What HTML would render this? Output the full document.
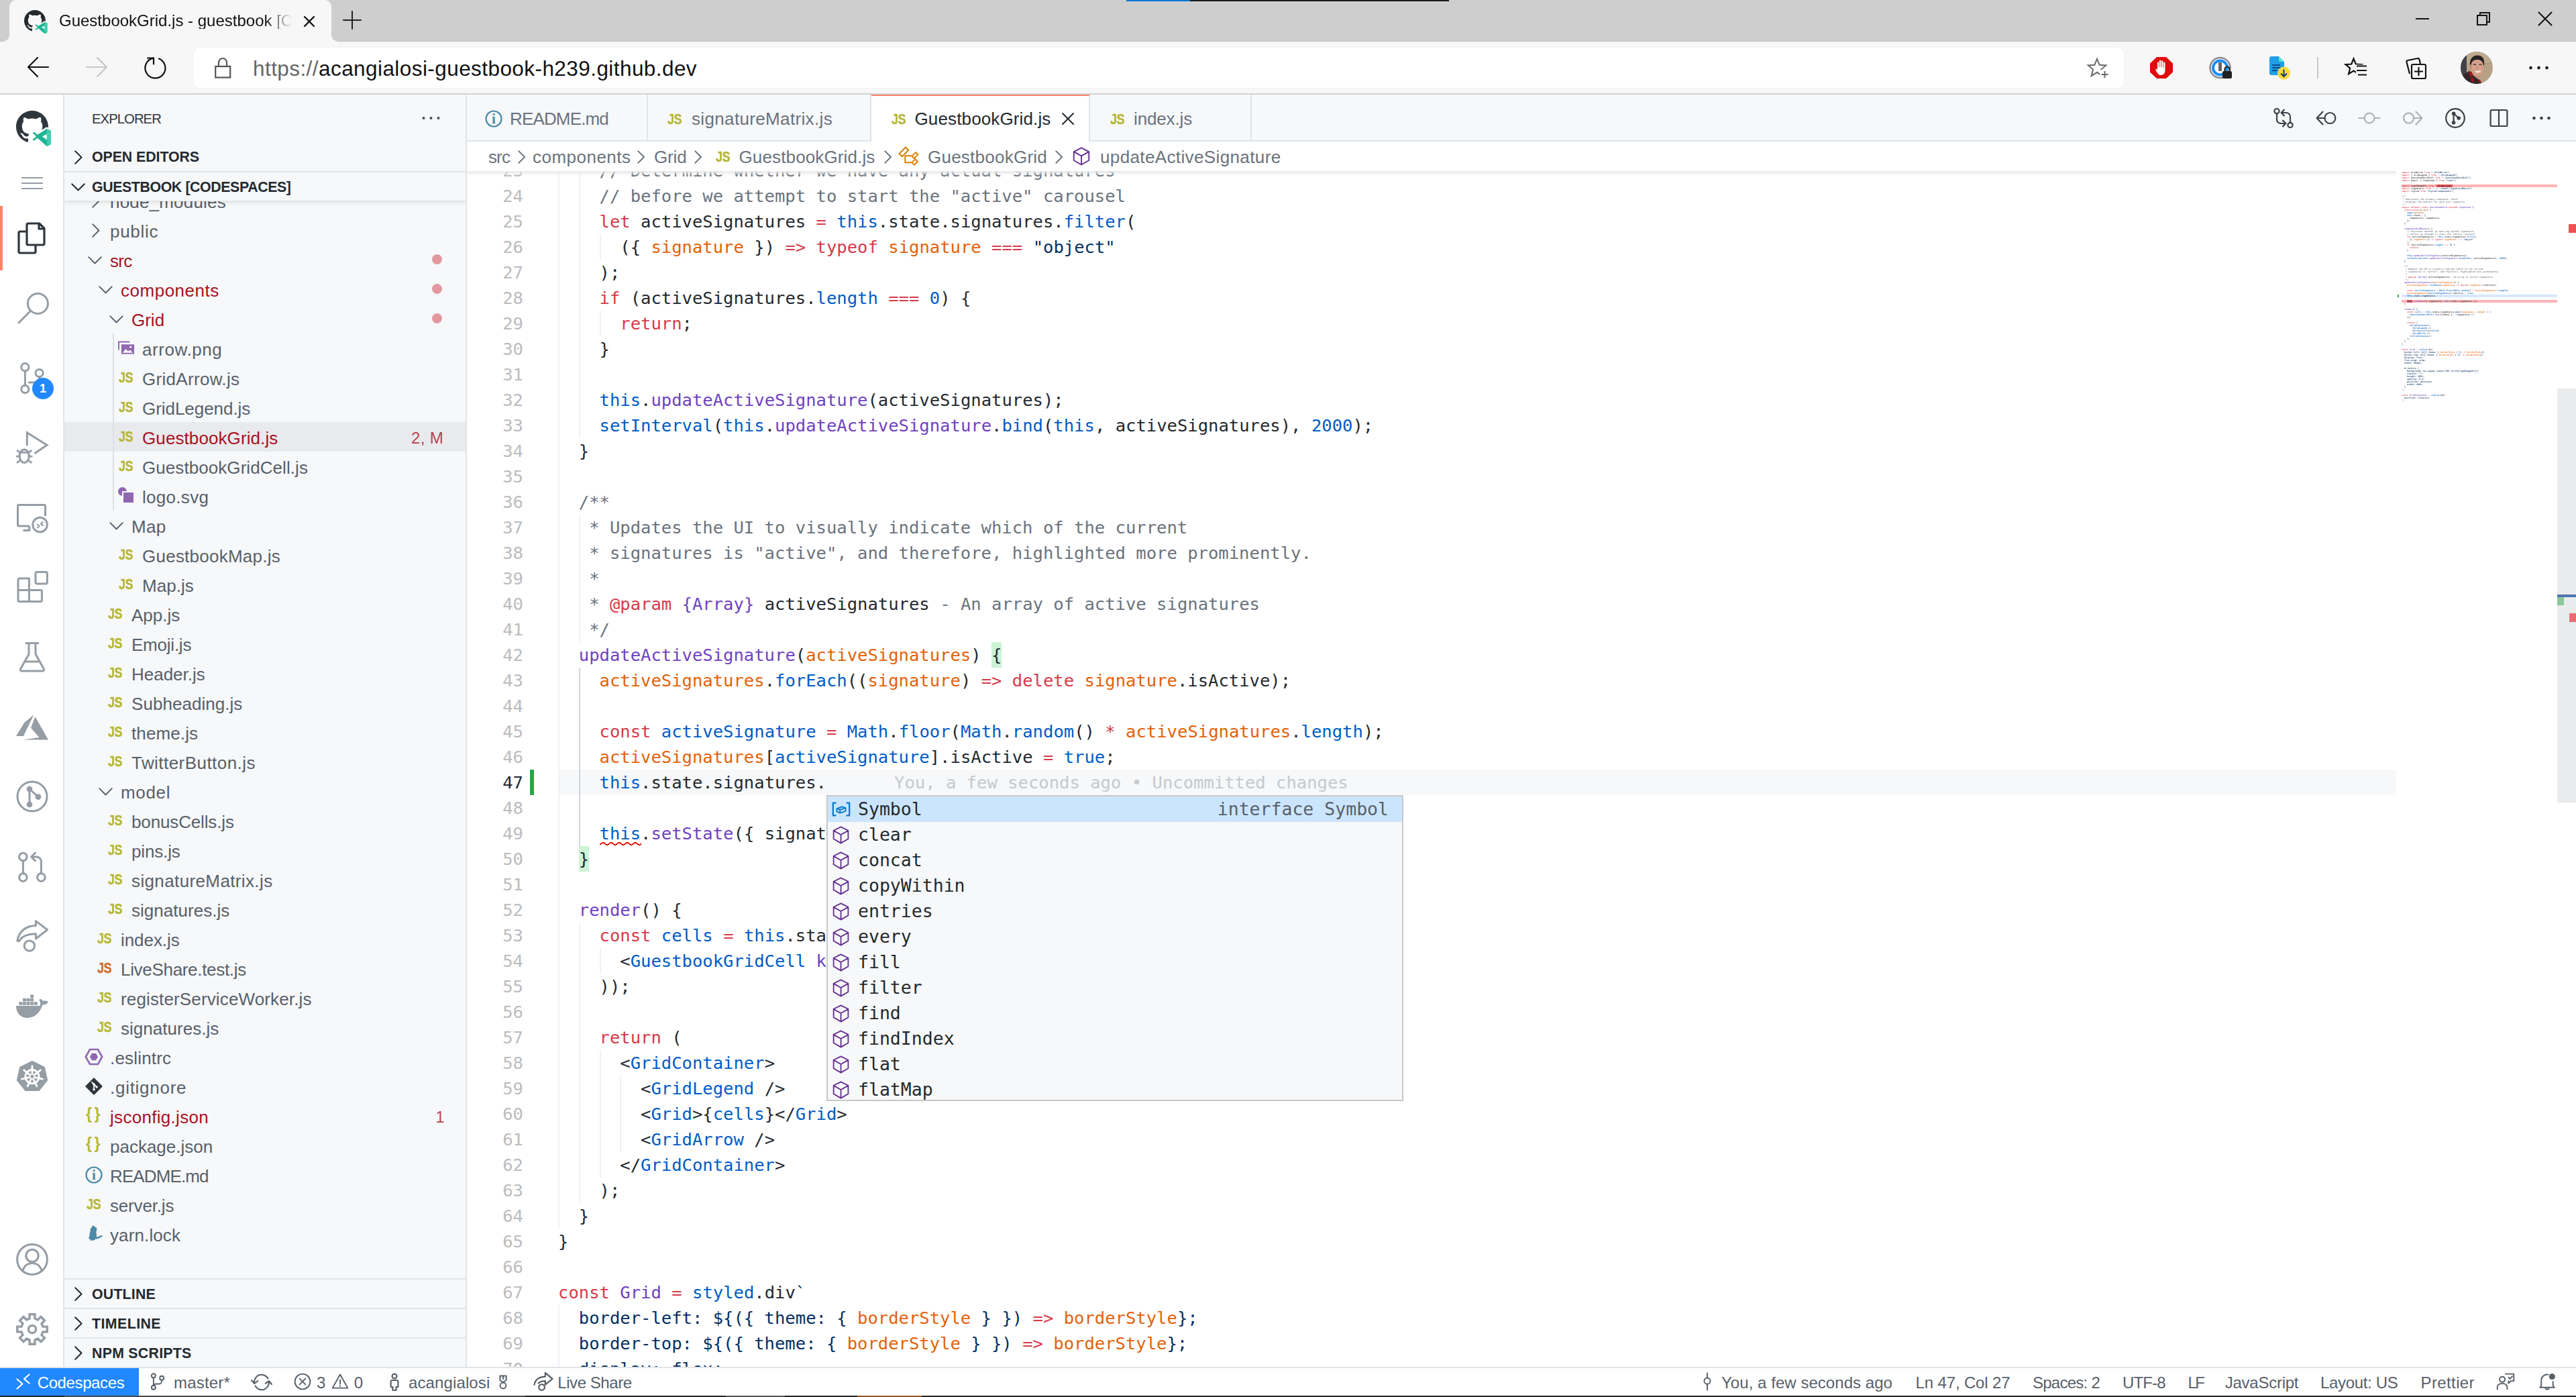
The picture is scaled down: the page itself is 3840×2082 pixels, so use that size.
<!DOCTYPE html>
<html lang="en"><head><meta charset="utf-8"><title>GuestbookGrid.js - guestbook [Codespaces]</title>
<style>
*{box-sizing:border-box;margin:0;padding:0}
html,body{width:3840px;height:2082px;overflow:hidden;background:#fff}
body{position:relative;font-family:"Liberation Sans",sans-serif;color:#24292e;-webkit-font-smoothing:antialiased}
.a,.a div,.a svg{position:absolute}
.t{white-space:pre;line-height:1}
svg{position:absolute;overflow:visible}
.s{fill:none;stroke-linecap:round;stroke-linejoin:round}
/* browser chrome */
#tabstrip{left:0;top:0;width:3840px;height:62px;background:#cecece}
#toolbar{left:0;top:62px;width:3840px;height:78px;background:#f7f7f7}
#tbline{left:0;top:139px;width:3840px;height:2px;background:#d2d2d2}
#btab{left:14px;top:0;width:480px;height:62px;background:#f7f7f7;border-radius:10px 10px 0 0}
#urlbox{left:288px;top:71px;width:2878px;height:60px;background:#fff;border-radius:9px}
/* vscode */
#act{left:0;top:141px;width:96px;height:1896px;background:#fff;border-right:2px solid #e1e4e8}
#side{left:96px;top:141px;width:600px;height:1896px;background:#f6f8fa;border-right:2px solid #e1e4e8;overflow:hidden}
#edit{left:696px;top:141px;width:3144px;height:1896px;background:#fff;overflow:hidden}
#status{left:0;top:2037px;width:3840px;height:43px;background:#fff;border-top:2px solid #e1e4e8}
#bottom{left:0;top:2080px;width:3840px;height:2px;background:#232323}
.row{left:0;width:598px;height:44px}
.row .t{font-size:26px;top:8px;color:#586069}
.hdr{left:0;width:598px;height:44px;border-top:2px solid #e1e4e8;background:#f6f8fa}

.code{font-family:"DejaVu Sans Mono","Liberation Mono",monospace;font-size:25.56px;white-space:pre;line-height:38px;height:38px}
.ln{font-family:"DejaVu Sans Mono","Liberation Mono",monospace;font-size:25.56px;white-space:pre;line-height:38px;height:38px;color:#bbbcbd;text-align:right;width:80px;left:4px}
.bm{background:rgba(52,208,88,.25);display:inline-block;height:38px;vertical-align:top}
.mm .bm{display:inline;height:auto;background:none}
.k{color:#d73a49}.c{color:#6a737d}.s1{color:#032f62}.n{color:#005cc5}.f{color:#6f42c1}.v{color:#e36209}
.sb{font-size:24px;color:#586069;top:9px}
</style></head>
<body>
<div id="tabstrip" class="a">
<div style="left:1679px;top:0;width:95px;height:2px;background:#0078d4"></div>
<div style="left:1774px;top:0;width:386px;height:2px;background:#1b1b1b"></div>
<div style="left:0;top:61px;width:3840px;height:1px;background:#c1c1c1"></div>
<div id="btab"></div>
<svg style="left:4px;top:52px" width="10" height="10"><path d="M10 0V10H0A10 10 0 0 0 10 0Z" fill="#f7f7f7"/></svg>
<svg style="left:494px;top:52px" width="10" height="10"><path d="M0 0V10H10A10 10 0 0 1 0 0Z" fill="#f7f7f7"/></svg>
<svg style="left:36px;top:15px" width="37.3333" height="37.3333" viewBox="0 0 56 56"><path transform="scale(3)" d="M8 0C3.580 0 0 3.580 0 8c0 3.540 2.290 6.530 5.470 7.590.4.070.550-.170.550-.380 0-.190-.010-.820-.010-1.490-2.010.370-2.530-.490-2.690-.940-.090-.230-.480-.940-.820-1.130-.280-.150-.680-.520-.010-.530.630-.010 1.080.580 1.230.820.720 1.210 1.870.870 2.330.660.070-.520.280-.870.510-1.070-1.780-.200-3.640-.890-3.640-3.950 0-.870.310-1.590.820-2.150-.080-.200-.360-1.020.080-2.120 0 0 .670-.210 2.200.820.640-.180 1.320-.270 2-.270.680 0 1.360.090 2 .270 1.530-1.040 2.200-.820 2.200-.820.440 1.100.160 1.920.080 2.120.510.560.820 1.270.820 2.150 0 3.070-1.870 3.750-3.650 3.950.290.250.540.730.540 1.480 0 1.070-.010 1.930-.010 2.200 0 .210.150.460.550.380A8.013 8.013 0 0 0 16 8c0-4.420-3.580-8-8-8z" fill="#24292e"/><g transform="translate(40 40) scale(.9) translate(-40 -40)"><path d="M46.500 25.500l6.500 3v23l-6.500 3L31 40.800l-5.500 4.400-2.800-1.500 6.300-5.700-6.300-5.700 2.800-1.500 5.500 4.400Zm0 8.700L38.800 38l7.700 5.800Z" fill="#f7f7f7" stroke="#f7f7f7" stroke-width="5.500" stroke-linejoin="round"/><path d="M26 37h22v19H26Z" fill="#f7f7f7"/><path d="M46.500 25.500l6.500 3v23l-6.500 3L31 40.800l-5.500 4.400-2.800-1.500 6.300-5.700-6.300-5.700 2.800-1.500 5.500 4.400Zm0 8.700L38.800 38l7.700 5.800Z" fill="#1fb493"/><path d="M46.500 25.500l6.500 3v23l-6.500 3Z" fill="#3ecfae"/></g></svg>
<div class="t" style="left:88px;top:19px;font-size:24px;color:#111;width:348px;overflow:hidden;-webkit-mask-image:linear-gradient(90deg,#000 88%,transparent 100%)">GuestbookGrid.js - guestbook [Codespaces]</div>
<svg style="left:453px;top:24px" width="16" height="16"><path class="s" d="M1 1L15 15M15 1L1 15" stroke="#111" stroke-width="2.4"/></svg>
<svg style="left:512px;top:17px" width="26" height="26"><path class="s" d="M13 0V26M0 13H26" stroke="#222" stroke-width="2" stroke-linecap="butt"/></svg>
<div style="left:3601px;top:27px;width:20px;height:2px;background:#111"></div>
<svg style="left:3692px;top:18px" width="20" height="20"><path d="M1 5H15V19H1ZM5 5V1H19V15H15" fill="none" stroke="#111" stroke-width="2"/></svg>
<svg style="left:3784px;top:18px" width="20" height="20"><path class="s" d="M0.500.5L19.500 19.500M19.500.5L.5 19.500" stroke="#111" stroke-width="2"/></svg>
</div>
<div id="toolbar" class="a"></div><div id="tbline" class="a"></div>
<div class="a" style="left:0;top:0;width:3840px;height:140px">
<div id="urlbox" style="box-shadow:0 0 2px rgba(0,0,0,.08)"></div>
<svg style="left:40px;top:84px" width="34" height="32"><path class="s" d="M32 16H2M16 2L2 16L16 30" stroke="#111" stroke-width="2.200" stroke-linecap="butt" stroke-linejoin="miter"/></svg>
<svg style="left:127px;top:84px" width="34" height="32"><path class="s" d="M2 16H32M18 2L32 16L18 30" stroke="#c8c8c8" stroke-width="2.200" stroke-linecap="butt" stroke-linejoin="miter"/></svg>
<svg style="left:215px;top:84px" width="34" height="34"><path class="s" d="M13.500 2.700A15 15 0 1 0 22 3.500" stroke="#111" stroke-width="2.200"/><path class="s" d="M5 2.500H14V11.500" stroke="#111" stroke-width="2.200" stroke-linejoin="miter" stroke-linecap="butt"/></svg>
<svg style="left:320px;top:85px" width="25" height="32"><rect x="1.200" y="14" width="22" height="16.500" fill="none" stroke="#555" stroke-width="2.200"/><path d="M6 14V8a6 6 0 0 1 12 0v6" fill="none" stroke="#555" stroke-width="2.200"/></svg>
<div class="t" style="left:377px;top:86.500px;font-size:31.500px;letter-spacing:0.430px;color:#111"><span style="color:#666">https://</span>acangialosi-guestbook-h239.github.dev</div>
<svg style="left:3110px;top:85px" width="34" height="34"><path d="M16 2.800l3.700 8.900 9.600.7-7.400 6.200 2.400 9.400-8.300-5.200-8.300 5.200 2.400-9.400L2.700 12.400l9.600-.7Z" fill="none" stroke="#6a6a6a" stroke-width="2" stroke-linejoin="miter"/><rect x="20.500" y="19" width="14" height="14" fill="#fff"/><path d="M27.500 21v10M22.500 26h10" stroke="#6a6a6a" stroke-width="2"/></svg>
<svg style="left:3205px;top:85px" width="34" height="32" viewBox="0 0 34 32"><path d="M10 0H24L34 9.500V22.500L24 32H10L0 22.500V9.500Z" fill="#e00b0b"/><path d="M11 8.500c0-1.600 2.200-1.600 2.200 0V15h.8V5.800c0-1.700 2.300-1.700 2.300 0V15h.8V6.500c0-1.700 2.300-1.700 2.300 0V15.500h.8V9c0-1.700 2.300-1.700 2.300 0V20c0 4-2.500 7-6 7-4 0-5.500-2.500-8-7.500-.8-1.600.8-2.600 1.800-1.400L11 20Z" fill="#fff"/></svg>
<svg style="left:3293px;top:84px" width="36" height="36" viewBox="0 0 36 36"><circle cx="16.500" cy="17" r="15" fill="none" stroke="#8c8c8c" stroke-width="2.500"/><circle cx="16.500" cy="17" r="10.500" fill="#fff" stroke="#1a8cff" stroke-width="4"/><rect x="14" y="9" width="5" height="13" fill="#666"/><rect x="20" y="22" width="14" height="11" rx="2" fill="#222"/><path d="M23.500 22v-3a3.500 3.500 0 0 1 7 0v3" fill="none" stroke="#222" stroke-width="2.200"/><rect x="17" y="17" width="19" height="18" fill="#f7f7f7" opacity="0"/></svg>
<svg style="left:3383px;top:84px" width="32" height="36" viewBox="0 0 32 36"><path d="M0 3a3 3 0 0 1 3-3H14L22 8V25a3 3 0 0 1-3 3H3a3 3 0 0 1-3-3Z" fill="#1e9fe8"/><path d="M14 0L22 8H16a2 2 0 0 1-2-2Z" fill="#4fe5d0"/><path d="M4 13H16M4 17H16M4 21H12" stroke="#0b4a8a" stroke-width="1.800"/><circle cx="21.500" cy="25" r="9.500" fill="#ffd93b"/><path d="M21.500 19.500V30M17 25.500l4.500 4.500 4.500-4.500" fill="none" stroke="#123a6b" stroke-width="2"/></svg>
<div style="left:3454px;top:85px;width:2px;height:32px;background:#c9c9c9"></div>
<svg style="left:3495px;top:84px" width="36" height="36" viewBox="0 0 36 36"><path d="M13.500 3.500l3.300 8 8.700.6-6.700 5.600 2.100 8.500-7.400-4.600-7.400 4.600 2.100-8.500L1.500 12.100l8.700-.6Z" fill="none" stroke="#111" stroke-width="2.200" stroke-linejoin="miter"/><rect x="17" y="12.500" width="18" height="18" fill="#f7f7f7"/><path d="M18 14.500h15M18 21h15M20 27.500h13" fill="none" stroke="#111" stroke-width="2.200"/></svg>
<svg style="left:3585px;top:84px" width="34" height="36" viewBox="0 0 34 36"><rect x="10" y="12" width="21" height="21" rx="2" fill="#f7f7f7" stroke="#111" stroke-width="2.200"/><path d="M7 26L2.500 8.500a2 2 0 0 1 1.500-2.500L19 3a2 2 0 0 1 2.400 1.400L23 11" fill="none" stroke="#111" stroke-width="2.200"/><path d="M20.500 16v13M14 22.500h13" stroke="#111" stroke-width="2.200"/></svg>
<svg style="left:3668px;top:77px" width="48" height="48" viewBox="0 0 48 48"><defs><clipPath id="avc"><circle cx="24" cy="24" r="24"/></clipPath><filter id="avb" x="-10%" y="-10%" width="120%" height="120%"><feGaussianBlur stdDeviation=".7"/></filter></defs><g clip-path="url(#avc)"><rect width="48" height="48" fill="#b6a186"/><g filter="url(#avb)"><rect x="9" y="0" width="40" height="17" fill="#bda98d"/><path d="M35 17.500H48" stroke="#a38f77" stroke-width=".8"/><rect x="-2" y="4" width="11" height="36" fill="#404346"/><path d="M14 20C13 11 18 5.500 25 5.500S36 10 35 19l-1.500 5-18.500 1Z" fill="#2b2422"/><ellipse cx="13.800" cy="22.500" rx="1.800" ry="3.500" fill="#c99a88"/><path d="M15.500 22c0-4 1-7 3.500-8.500 3.500-2 9-2 12 .5 2.500 2 3.500 6 3 11-.5 5-3 10.500-7 12-3 1-5.500 0-7.500-3-2.500-3.500-4-7-4-12Z" fill="#d3a08a"/><path d="M19 19.500q2-1 4 0M27.500 19.500q2-1 4 0" stroke="#4a3634" stroke-width="1.400" fill="none"/><path d="M24.500 21v5" stroke="#bf8c78" stroke-width="1.500"/><path d="M21 28c2.500 1 7 1 9.500-.5-.5 2.500-2.500 4-5 4s-4-1.500-4.500-3.500Z" fill="#efe3dd"/><path d="M19.500 33c2 3.500 6 4.500 9.500 2.500l-1 3.500-6 .5Z" fill="#b98672" opacity=".7"/><path d="M2 36L13 28.500l3 4.500 7 6 5.500 3.500 3 4.500L30 50H6Z" fill="#33282a"/><path d="M12 31.500l3.500-2.500 3.500 6-3.500 3.500Z" fill="#a3121b"/><path d="M15 40l3.500-1.500 2 5L17.500 46Z" fill="#a3121b"/><path d="M26.500 41.500l3 .5.500 4-3.500-1Z" fill="#a3121b"/></g></g></svg>
<svg style="left:3770px;top:98px" width="30" height="6"><circle cx="2.500" cy="3" r="2.300" fill="#111"/><circle cx="14.500" cy="3" r="2.300" fill="#111"/><circle cx="26.500" cy="3" r="2.300" fill="#111"/></svg>
</div>
<div id="act" class="a"></div><div class="a" style="left:0;top:0;width:96px;height:2036px">
<svg style="left:24px;top:165px" width="56" height="56" viewBox="0 0 56 56"><path transform="scale(3)" d="M8 0C3.580 0 0 3.580 0 8c0 3.540 2.290 6.530 5.470 7.590.4.070.550-.170.550-.380 0-.190-.010-.820-.010-1.490-2.010.370-2.530-.490-2.690-.940-.090-.230-.480-.940-.820-1.130-.280-.150-.680-.520-.010-.530.630-.010 1.080.580 1.230.820.720 1.210 1.870.870 2.330.660.070-.520.280-.870.510-1.070-1.780-.200-3.640-.890-3.640-3.950 0-.870.310-1.590.820-2.150-.080-.200-.360-1.020.080-2.120 0 0 .670-.210 2.200.820.640-.180 1.320-.270 2-.270.680 0 1.360.090 2 .270 1.530-1.040 2.200-.820 2.200-.820.440 1.100.160 1.920.080 2.120.510.560.820 1.270.820 2.150 0 3.070-1.870 3.750-3.650 3.950.290.250.540.730.540 1.480 0 1.070-.010 1.930-.010 2.200 0 .210.150.460.550.380A8.013 8.013 0 0 0 16 8c0-4.420-3.580-8-8-8z" fill="#2f363d"/><g transform="translate(40 40) scale(.9) translate(-40 -40)"><path d="M46.500 25.500l6.500 3v23l-6.500 3L31 40.800l-5.500 4.400-2.800-1.500 6.300-5.700-6.300-5.700 2.800-1.500 5.500 4.400Zm0 8.700L38.800 38l7.700 5.800Z" fill="#fff" stroke="#fff" stroke-width="5.500" stroke-linejoin="round"/><path d="M26 37h22v19H26Z" fill="#fff"/><path d="M46.500 25.500l6.500 3v23l-6.500 3L31 40.800l-5.500 4.400-2.800-1.500 6.300-5.700-6.300-5.700 2.800-1.500 5.500 4.400Zm0 8.700L38.800 38l7.700 5.800Z" fill="#1fb493"/><path d="M46.500 25.500l6.500 3v23l-6.500 3Z" fill="#3ecfae"/></g></svg>
<div style="left:32px;top:264px;width:32px;height:2px;background:#959da5"></div>
<div style="left:32px;top:272px;width:32px;height:2px;background:#959da5"></div>
<div style="left:32px;top:280px;width:32px;height:2px;background:#959da5"></div>
<div style="left:0;top:307px;width:4px;height:96px;background:#f9826c"></div>
<svg style="left:23px;top:331px" width="48" height="48" viewBox="0 0 24 24"><path class="s" d="M9.500 1h8.300l3.700 3.700V16a1 1 0 0 1-1 1h-11a1 1 0 0 1-1-1V2a1 1 0 0 1 1-1ZM17.500 1.200V5h3.800M8.200 7H3.500a1 1 0 0 0-1 1v14a1 1 0 0 0 1 1h10.500a1 1 0 0 0 1-1v-4.700" stroke="#2f363d" stroke-width="1.6" /></svg>
<svg style="left:24px;top:434.5px" width="48" height="48" viewBox="0 0 24 24"><circle cx="16.200" cy="8.700" r="7.500" fill="none" stroke="#959da5" stroke-width="1.500"/><path class="s" d="M10.800 14.100L2 23" stroke="#959da5" stroke-width="1.5" /></svg>
<svg style="left:24px;top:539.5px" width="48" height="48" viewBox="0 0 24 24"><circle cx="6.7" cy="3.6" r="2.800" fill="none" stroke="#959da5" stroke-width="1.500"/><circle cx="6.7" cy="20" r="2.800" fill="none" stroke="#959da5" stroke-width="1.500"/><circle cx="17.3" cy="8" r="2.800" fill="none" stroke="#959da5" stroke-width="1.500"/><path class="s" d="M6.700 6.400V17.200M17.300 10.800v1.200a3 3 0 0 1-3 3H9.700" stroke="#959da5" stroke-width="1.5" /></svg>
<div style="left:48px;top:563px;width:32px;height:32px;border-radius:16px;background:#2188ff"></div><div class="t" style="left:48px;top:570px;width:32px;text-align:center;font-size:18px;font-weight:700;color:#fff">1</div>
<svg style="left:24px;top:643px" width="48" height="48" viewBox="0 0 24 24"><path class="s" d="M8.150 10.600V.9L23 10.100 13.700 16.500" stroke="#959da5" stroke-width="1.5" style="stroke-linecap:butt;stroke-linejoin:miter"/><ellipse cx="6.100" cy="18.400" rx="3.500" ry="4.900" fill="none" stroke="#959da5" stroke-width="1.500"/><path class="s" d="M3.300 15.700H8.900M.5 14L2.900 15.800M11.700 14L9.300 15.800M0 18.600H3M12.200 18.600H9.200M.5 23.400L2.800 21.700M11.700 23.400L9.400 21.700" stroke="#959da5" stroke-width="1.4" style="stroke-linecap:butt"/></svg>
<svg style="left:24px;top:749px" width="48" height="48" viewBox="0 0 24 24"><path class="s" d="M9.900 17.500H2a.75.750 0 0 1-.75-.75V2.450a.75.750 0 0 1 .75-.75H21a.75.750 0 0 1 .75.750V10.100M9.900 17.500V20.700M5.200 20.700H10.700" stroke="#959da5" stroke-width="1.5" style="stroke-linecap:butt"/><circle cx="17.800" cy="16.500" r="5.400" fill="#fff" stroke="#959da5" stroke-width="1.500"/><path class="s" d="M15.600 16l1.800 1.500-1.800 1.500M20.200 14.300l-1.800 1.500 1.800 1.500" stroke="#959da5" stroke-width="1.1" style="stroke-linecap:butt"/></svg>
<svg style="left:24px;top:851px" width="48" height="48" viewBox="0 0 24 24"><path class="s" d="M1.500 6.500a1 1 0 0 1 1-1H9.700V22.700H2.500a1 1 0 0 1-1-1ZM9.700 14.300H18.200a1 1 0 0 1 1 1V21.700a1 1 0 0 1-1 1H9.700M1.500 14.300H9.700" stroke="#959da5" stroke-width="1.5" /><rect x="14.500" y=".8" width="8.700" height="8.700" rx="1.200" fill="none" stroke="#959da5" stroke-width="1.500"/></svg>
<svg style="left:24px;top:955px" width="48" height="48" viewBox="0 0 24 24"><path class="s" d="M7.500 1.800h9M9.500 1.800V10L3.300 21a1 1 0 0 0 .9 1.500H19.800a1 1 0 0 0 .9-1.500L14.500 10V1.800M6.200 15.500H17.800" stroke="#959da5" stroke-width="1.5" /></svg>
<svg style="left:24px;top:1059.5px" width="48" height="48" viewBox="0 0 24 24"><path transform="translate(0 .1) scale(1 .92)" d="M13.200 2.800L6 9.200 0 20h5.500ZM14.200 4.300l-3.200 9 6.200 7.800L5.300 23H24Z" fill="#959da5"/></svg>
<svg style="left:24px;top:1162.5px" width="48" height="48" viewBox="0 0 24 24"><circle cx="12" cy="12" r="11" fill="none" stroke="#959da5" stroke-width="1.500"/><circle cx="10" cy="6.500" r="2.200" fill="#959da5"/><circle cx="10" cy="18" r="2.200" fill="#959da5"/><circle cx="16.500" cy="12.300" r="2.200" fill="#959da5"/><path class="s" d="M10 6.500V18M10 6.500L16.500 12.300" stroke="#959da5" stroke-width="1.5" /></svg>
<svg style="left:24px;top:1268px" width="48" height="48" viewBox="0 0 24 24"><circle cx="5.2" cy="4.5" r="2.900" fill="none" stroke="#959da5" stroke-width="1.500"/><circle cx="5.2" cy="19.8" r="2.900" fill="none" stroke="#959da5" stroke-width="1.500"/><circle cx="18.7" cy="19.8" r="2.900" fill="none" stroke="#959da5" stroke-width="1.500"/><path class="s" d="M5.200 7.400V16.900M18.700 16.900V8a3.500 3.500 0 0 0-3.500-3.500H11.500M14.300 1.500l-3 3 3 3" stroke="#959da5" stroke-width="1.5" /></svg>
<svg style="left:24px;top:1371px" width="48" height="48" viewBox="0 0 24 24"><path class="s" d="M.9 15.600C2 8.500 7.500 4.200 14.700 4.200V.9L23.300 7.300 14.700 14V10.400C9 10.400 4.500 12 2.200 15.900Z" stroke="#959da5" stroke-width="1.5" /><circle cx="9.950" cy="19.300" r="3.850" fill="none" stroke="#959da5" stroke-width="1.500"/></svg>
<svg style="left:24px;top:1476px" width="48" height="48" viewBox="0 0 24 24"><path d="M0 11.500H17.800c.5-1.500.2-3.300-.7-4.500 1.300-.9 2-.5 2.900.9 1-.3 2.700-.4 4 .6-1 1.800-2.600 2.300-4.300 2.300C18 16.500 14 20.500 8.500 20.500 3.500 20.500 0 17 0 11.500Z" fill="#959da5"/><rect x="2.2" y="8.6" width="2.500" height="2.300" fill="#959da5"/><rect x="5" y="8.6" width="2.500" height="2.300" fill="#959da5"/><rect x="7.8" y="8.6" width="2.500" height="2.300" fill="#959da5"/><rect x="10.6" y="8.6" width="2.500" height="2.300" fill="#959da5"/><rect x="13.4" y="8.6" width="2.500" height="2.300" fill="#959da5"/><rect x="5" y="5.9" width="2.500" height="2.300" fill="#959da5"/><rect x="7.8" y="5.9" width="2.500" height="2.300" fill="#959da5"/><rect x="10.6" y="5.9" width="2.500" height="2.300" fill="#959da5"/><rect x="10.6" y="3.2" width="2.500" height="2.300" fill="#959da5"/></svg>
<svg style="left:25px;top:1580.5px" width="46" height="46" viewBox="0 0 24 24"><path d="M12 .5L21.300 5 23.600 15 17.200 23H6.800L.4 15 2.700 5Z" fill="#959da5" stroke="#959da5" stroke-width="1" stroke-linejoin="round"/><circle cx="12" cy="12.300" r="5.300" fill="none" stroke="#fff" stroke-width="1.500"/><path d="M12 12.300L12.00 4.10" stroke="#fff" stroke-width="1.500" stroke-linecap="round"/><path d="M12 12.300L18.41 7.19" stroke="#fff" stroke-width="1.500" stroke-linecap="round"/><path d="M12 12.300L19.99 14.12" stroke="#fff" stroke-width="1.500" stroke-linecap="round"/><path d="M12 12.300L15.56 19.69" stroke="#fff" stroke-width="1.500" stroke-linecap="round"/><path d="M12 12.300L8.44 19.69" stroke="#fff" stroke-width="1.500" stroke-linecap="round"/><path d="M12 12.300L4.01 14.12" stroke="#fff" stroke-width="1.500" stroke-linecap="round"/><path d="M12 12.300L5.59 7.19" stroke="#fff" stroke-width="1.500" stroke-linecap="round"/><circle cx="12" cy="12.300" r="1.300" fill="#959da5"/></svg>
<svg style="left:24px;top:1853px" width="48" height="48" viewBox="0 0 24 24"><circle cx="12" cy="12" r="11.200" fill="none" stroke="#959da5" stroke-width="1.500"/><circle cx="12" cy="9.200" r="4.600" fill="none" stroke="#959da5" stroke-width="1.500"/><path class="s" d="M5 20.500C6 16.500 9 14.800 12 14.800s6 1.700 7 5.700" stroke="#959da5" stroke-width="1.5" /></svg>
<svg style="left:24px;top:1957px" width="48" height="48" viewBox="0 0 24 24"><path d="M10.04 0.87L13.96 0.87L13.98 4.04L16.22 4.97L18.48 2.74L21.26 5.52L19.03 7.78L19.96 10.02L23.13 10.04L23.13 13.96L19.96 13.98L19.03 16.22L21.26 18.48L18.48 21.26L16.22 19.03L13.98 19.96L13.96 23.13L10.04 23.13L10.02 19.96L7.78 19.03L5.52 21.26L2.74 18.48L4.97 16.22L4.04 13.98L0.87 13.96L0.87 10.04L4.04 10.02L4.97 7.78L2.74 5.52L5.52 2.74L7.78 4.97L10.02 4.04Z" fill="none" stroke="#959da5" stroke-width="1.700" stroke-linejoin="miter"/><circle cx="12" cy="12" r="2.800" fill="none" stroke="#959da5" stroke-width="1.700"/></svg>
</div>
<div id="side" class="a">
<div class="row" style="top:136px">
<svg style="left:41px;top:11.5px" width="12" height="21"><path class="s" d="M1.200 1.200L10.500 10.500 1.200 19.800" stroke="#586069" stroke-width="1.9" stroke-linecap="butt" stroke-linejoin="miter"/></svg>
<div class="t" style="left:68px;top:10.5px;font-size:26px;letter-spacing:0.193px;color:#586069">node_modules</div>
</div>
<div class="row" style="top:180px">
<svg style="left:41px;top:11.5px" width="12" height="21"><path class="s" d="M1.200 1.200L10.500 10.500 1.200 19.800" stroke="#586069" stroke-width="1.9" stroke-linecap="butt" stroke-linejoin="miter"/></svg>
<div class="t" style="left:68px;top:10.5px;font-size:26px;letter-spacing:0.711px;color:#586069">public</div>
</div>
<div class="row" style="top:224px">
<svg style="left:35px;top:17px" width="21" height="12"><path class="s" d="M1.200 1.200L10.500 10.500 19.800 1.200" stroke="#586069" stroke-width="1.9" stroke-linecap="butt" stroke-linejoin="miter"/></svg>
<div class="t" style="left:68px;top:10.5px;font-size:26px;letter-spacing:-0.686px;color:#a8121f">src</div>
<div style="left:548px;top:14px;width:15px;height:15px;border-radius:50%;background:#cb2431;opacity:.45"></div>
</div>
<div class="row" style="top:268px">
<svg style="left:51px;top:17px" width="21" height="12"><path class="s" d="M1.200 1.200L10.500 10.500 19.800 1.200" stroke="#586069" stroke-width="1.9" stroke-linecap="butt" stroke-linejoin="miter"/></svg>
<div class="t" style="left:84px;top:10.5px;font-size:26px;letter-spacing:0.515px;color:#a8121f">components</div>
<div style="left:548px;top:14px;width:15px;height:15px;border-radius:50%;background:#cb2431;opacity:.45"></div>
</div>
<div class="row" style="top:312px">
<svg style="left:67px;top:17px" width="21" height="12"><path class="s" d="M1.200 1.200L10.500 10.500 19.800 1.200" stroke="#586069" stroke-width="1.9" stroke-linecap="butt" stroke-linejoin="miter"/></svg>
<div class="t" style="left:100px;top:10.5px;font-size:26px;letter-spacing:-0.005px;color:#a8121f">Grid</div>
<div style="left:548px;top:14px;width:15px;height:15px;border-radius:50%;background:#cb2431;opacity:.45"></div>
</div>
<div class="row" style="top:356px">
<svg style="left:79.5px;top:10.5px" width="25" height="23" viewBox="0 0 26 24"><path d="M1 14V1.500H18" fill="none" stroke="#9068b0" stroke-width="2"/><rect x="5" y="5.500" width="20" height="15" fill="#9068b0"/><path d="M7 18.500l5-6 3.500 4 3-2.500 4.500 4.500Z" fill="#f6f8fa"/><circle cx="19.500" cy="9.500" r="1.700" fill="#f6f8fa"/></svg>
<div class="t" style="left:116px;top:10.5px;font-size:26px;letter-spacing:0.568px;color:#586069">arrow.png</div>
</div>
<div class="row" style="top:400px">
<div class="t" style="left:81px;top:11px;font-size:22.500px;font-weight:700;color:#b7b73b;transform:scaleX(.8);transform-origin:0 0;letter-spacing:-.5px;-webkit-text-stroke:.5px #b7b73b">JS</div>
<div class="t" style="left:116px;top:10.5px;font-size:26px;letter-spacing:0.310px;color:#586069">GridArrow.js</div>
</div>
<div class="row" style="top:444px">
<div class="t" style="left:81px;top:11px;font-size:22.500px;font-weight:700;color:#b7b73b;transform:scaleX(.8);transform-origin:0 0;letter-spacing:-.5px;-webkit-text-stroke:.5px #b7b73b">JS</div>
<div class="t" style="left:116px;top:10.5px;font-size:26px;letter-spacing:-0.045px;color:#586069">GridLegend.js</div>
</div>
<div class="row" style="top:488px;background:#e8eaed">
<div class="t" style="left:81px;top:11px;font-size:22.500px;font-weight:700;color:#b7b73b;transform:scaleX(.8);transform-origin:0 0;letter-spacing:-.5px;-webkit-text-stroke:.5px #b7b73b">JS</div>
<div class="t" style="left:116px;top:10.5px;font-size:26px;letter-spacing:0.096px;color:#a8121f">GuestbookGrid.js</div>
<div class="t" style="right:33px;color:#a8121f;font-size:24px;top:11.500px;letter-spacing:.3px;opacity:.8">2, M</div>
</div>
<div class="row" style="top:532px">
<div class="t" style="left:81px;top:11px;font-size:22.500px;font-weight:700;color:#b7b73b;transform:scaleX(.8);transform-origin:0 0;letter-spacing:-.5px;-webkit-text-stroke:.5px #b7b73b">JS</div>
<div class="t" style="left:116px;top:10.5px;font-size:26px;letter-spacing:0.067px;color:#586069">GuestbookGridCell.js</div>
</div>
<div class="row" style="top:576px">
<svg style="left:79px;top:8px" width="26" height="26" viewBox="0 0 26 26"><circle cx="7.500" cy="7.500" r="6.500" fill="#9068b0"/><rect x="8" y="8" width="17" height="17" fill="#9068b0" stroke="#f6f8fa" stroke-width="2"/></svg>
<div class="t" style="left:116px;top:10.5px;font-size:26px;letter-spacing:0.295px;color:#586069">logo.svg</div>
</div>
<div class="row" style="top:620px">
<svg style="left:67px;top:17px" width="21" height="12"><path class="s" d="M1.200 1.200L10.500 10.500 19.800 1.200" stroke="#586069" stroke-width="1.9" stroke-linecap="butt" stroke-linejoin="miter"/></svg>
<div class="t" style="left:100px;top:10.5px;font-size:26px;letter-spacing:0.340px;color:#586069">Map</div>
</div>
<div class="row" style="top:664px">
<div class="t" style="left:81px;top:11px;font-size:22.500px;font-weight:700;color:#b7b73b;transform:scaleX(.8);transform-origin:0 0;letter-spacing:-.5px;-webkit-text-stroke:.5px #b7b73b">JS</div>
<div class="t" style="left:116px;top:10.5px;font-size:26px;letter-spacing:0.245px;color:#586069">GuestbookMap.js</div>
</div>
<div class="row" style="top:708px">
<div class="t" style="left:81px;top:11px;font-size:22.500px;font-weight:700;color:#b7b73b;transform:scaleX(.8);transform-origin:0 0;letter-spacing:-.5px;-webkit-text-stroke:.5px #b7b73b">JS</div>
<div class="t" style="left:116px;top:10.5px;font-size:26px;letter-spacing:0.020px;color:#586069">Map.js</div>
</div>
<div class="row" style="top:752px">
<div class="t" style="left:65px;top:11px;font-size:22.500px;font-weight:700;color:#b7b73b;transform:scaleX(.8);transform-origin:0 0;letter-spacing:-.5px;-webkit-text-stroke:.5px #b7b73b">JS</div>
<div class="t" style="left:100px;top:10.5px;font-size:26px;letter-spacing:-0.011px;color:#586069">App.js</div>
</div>
<div class="row" style="top:796px">
<div class="t" style="left:65px;top:11px;font-size:22.500px;font-weight:700;color:#b7b73b;transform:scaleX(.8);transform-origin:0 0;letter-spacing:-.5px;-webkit-text-stroke:.5px #b7b73b">JS</div>
<div class="t" style="left:100px;top:10.5px;font-size:26px;letter-spacing:-0.227px;color:#586069">Emoji.js</div>
</div>
<div class="row" style="top:840px">
<div class="t" style="left:65px;top:11px;font-size:22.500px;font-weight:700;color:#b7b73b;transform:scaleX(.8);transform-origin:0 0;letter-spacing:-.5px;-webkit-text-stroke:.5px #b7b73b">JS</div>
<div class="t" style="left:100px;top:10.5px;font-size:26px;letter-spacing:-0.016px;color:#586069">Header.js</div>
</div>
<div class="row" style="top:884px">
<div class="t" style="left:65px;top:11px;font-size:22.500px;font-weight:700;color:#b7b73b;transform:scaleX(.8);transform-origin:0 0;letter-spacing:-.5px;-webkit-text-stroke:.5px #b7b73b">JS</div>
<div class="t" style="left:100px;top:10.5px;font-size:26px;letter-spacing:0.046px;color:#586069">Subheading.js</div>
</div>
<div class="row" style="top:928px">
<div class="t" style="left:65px;top:11px;font-size:22.500px;font-weight:700;color:#b7b73b;transform:scaleX(.8);transform-origin:0 0;letter-spacing:-.5px;-webkit-text-stroke:.5px #b7b73b">JS</div>
<div class="t" style="left:100px;top:10.5px;font-size:26px;letter-spacing:0.117px;color:#586069">theme.js</div>
</div>
<div class="row" style="top:972px">
<div class="t" style="left:65px;top:11px;font-size:22.500px;font-weight:700;color:#b7b73b;transform:scaleX(.8);transform-origin:0 0;letter-spacing:-.5px;-webkit-text-stroke:.5px #b7b73b">JS</div>
<div class="t" style="left:100px;top:10.5px;font-size:26px;letter-spacing:0.448px;color:#586069">TwitterButton.js</div>
</div>
<div class="row" style="top:1016px">
<svg style="left:51px;top:17px" width="21" height="12"><path class="s" d="M1.200 1.200L10.500 10.500 19.800 1.200" stroke="#586069" stroke-width="1.9" stroke-linecap="butt" stroke-linejoin="miter"/></svg>
<div class="t" style="left:84px;top:10.5px;font-size:26px;letter-spacing:0.677px;color:#586069">model</div>
</div>
<div class="row" style="top:1060px">
<div class="t" style="left:65px;top:11px;font-size:22.500px;font-weight:700;color:#b7b73b;transform:scaleX(.8);transform-origin:0 0;letter-spacing:-.5px;-webkit-text-stroke:.5px #b7b73b">JS</div>
<div class="t" style="left:100px;top:10.5px;font-size:26px;letter-spacing:-0.141px;color:#586069">bonusCells.js</div>
</div>
<div class="row" style="top:1104px">
<div class="t" style="left:65px;top:11px;font-size:22.500px;font-weight:700;color:#b7b73b;transform:scaleX(.8);transform-origin:0 0;letter-spacing:-.5px;-webkit-text-stroke:.5px #b7b73b">JS</div>
<div class="t" style="left:100px;top:10.5px;font-size:26px;letter-spacing:-0.143px;color:#586069">pins.js</div>
</div>
<div class="row" style="top:1148px">
<div class="t" style="left:65px;top:11px;font-size:22.500px;font-weight:700;color:#b7b73b;transform:scaleX(.8);transform-origin:0 0;letter-spacing:-.5px;-webkit-text-stroke:.5px #b7b73b">JS</div>
<div class="t" style="left:100px;top:10.5px;font-size:26px;letter-spacing:0.376px;color:#586069">signatureMatrix.js</div>
</div>
<div class="row" style="top:1192px">
<div class="t" style="left:65px;top:11px;font-size:22.500px;font-weight:700;color:#b7b73b;transform:scaleX(.8);transform-origin:0 0;letter-spacing:-.5px;-webkit-text-stroke:.5px #b7b73b">JS</div>
<div class="t" style="left:100px;top:10.5px;font-size:26px;letter-spacing:0.026px;color:#586069">signatures.js</div>
</div>
<div class="row" style="top:1236px">
<div class="t" style="left:49px;top:11px;font-size:22.500px;font-weight:700;color:#b7b73b;transform:scaleX(.8);transform-origin:0 0;letter-spacing:-.5px;-webkit-text-stroke:.5px #b7b73b">JS</div>
<div class="t" style="left:84px;top:10.5px;font-size:26px;letter-spacing:-0.057px;color:#586069">index.js</div>
</div>
<div class="row" style="top:1280px">
<div class="t" style="left:49px;top:11px;font-size:22.500px;font-weight:700;color:#cc6d2e;transform:scaleX(.8);transform-origin:0 0;letter-spacing:-.5px;-webkit-text-stroke:.5px #cc6d2e">JS</div>
<div class="t" style="left:84px;top:10.5px;font-size:26px;letter-spacing:-0.312px;color:#586069">LiveShare.test.js</div>
</div>
<div class="row" style="top:1324px">
<div class="t" style="left:49px;top:11px;font-size:22.500px;font-weight:700;color:#b7b73b;transform:scaleX(.8);transform-origin:0 0;letter-spacing:-.5px;-webkit-text-stroke:.5px #b7b73b">JS</div>
<div class="t" style="left:84px;top:10.5px;font-size:26px;letter-spacing:0.139px;color:#586069">registerServiceWorker.js</div>
</div>
<div class="row" style="top:1368px">
<div class="t" style="left:49px;top:11px;font-size:22.500px;font-weight:700;color:#b7b73b;transform:scaleX(.8);transform-origin:0 0;letter-spacing:-.5px;-webkit-text-stroke:.5px #b7b73b">JS</div>
<div class="t" style="left:84px;top:10.5px;font-size:26px;letter-spacing:0.026px;color:#586069">signatures.js</div>
</div>
<div class="row" style="top:1412px">
<svg style="left:30px;top:9px" width="28" height="26" viewBox="0 0 28 26"><path d="M8 2h12L26.200 13 20 24H8L1.800 13Z" fill="none" stroke="#9068b0" stroke-width="2.600" stroke-linejoin="round"/><path d="M11 7.800h6L20 13l-3 5.200h-6L8 13Z" fill="#9068b0"/></svg>
<div class="t" style="left:68px;top:10.5px;font-size:26px;letter-spacing:0.180px;color:#586069">.eslintrc</div>
</div>
<div class="row" style="top:1456px">
<svg style="left:31px;top:9px" width="26" height="26" viewBox="0 0 26 26"><path d="M13 1L25 13 13 25 1 13Z" fill="#2f363d" stroke="#2f363d" stroke-width="1.500" stroke-linejoin="round"/><path d="M9.500 6.500L13 10v7.500M13 10l4 4" fill="none" stroke="#f6f8fa" stroke-width="1.800"/><circle cx="13" cy="17.800" r="1.800" fill="#f6f8fa"/><circle cx="17" cy="14" r="1.800" fill="#f6f8fa"/><circle cx="13" cy="10" r="1.800" fill="#f6f8fa"/></svg>
<div class="t" style="left:68px;top:10.5px;font-size:26px;letter-spacing:0.724px;color:#586069">.gitignore</div>
</div>
<div class="row" style="top:1500px">
<div class="t" style="left:32px;top:8px;font-size:23px;font-weight:700;color:#b7b73b;letter-spacing:3.500px">{}</div>
<div class="t" style="left:68px;top:10.5px;font-size:26px;letter-spacing:0.302px;color:#a8121f">jsconfig.json</div>
<div class="t" style="right:31px;color:#a8121f;font-size:24px;top:11.500px;letter-spacing:.3px;opacity:.8">1</div>
</div>
<div class="row" style="top:1544px">
<div class="t" style="left:32px;top:8px;font-size:23px;font-weight:700;color:#b7b73b;letter-spacing:3.500px">{}</div>
<div class="t" style="left:68px;top:10.5px;font-size:26px;letter-spacing:-0.010px;color:#586069">package.json</div>
</div>
<div class="row" style="top:1588px">
<svg style="left:31px;top:9px" width="26" height="26" viewBox="0 0 26 26"><circle cx="13" cy="13" r="11.500" fill="none" stroke="#498ba7" stroke-width="2.200"/></svg><div class="t" style="left:31px;top:12px;width:26px;text-align:center;font-family:'Liberation Serif',serif;font-weight:700;font-size:21px;color:#498ba7">i</div>
<div class="t" style="left:68px;top:10.5px;font-size:26px;letter-spacing:-0.887px;color:#586069">README.md</div>
</div>
<div class="row" style="top:1632px">
<div class="t" style="left:33px;top:11px;font-size:22.500px;font-weight:700;color:#b7b73b;transform:scaleX(.8);transform-origin:0 0;letter-spacing:-.5px;-webkit-text-stroke:.5px #b7b73b">JS</div>
<div class="t" style="left:68px;top:10.5px;font-size:26px;letter-spacing:-0.178px;color:#586069">server.js</div>
</div>
<div class="row" style="top:1676px">
<svg style="left:31px;top:8px" width="28" height="28" viewBox="0 0 28 28"><path d="M12 1.500c1.500 0 2 1.500 2.500 2.500 1-.5 2-.5 2 .5 1.500 2 1 4.500-.5 6.500 1 2 1.500 4.500.5 7.500 3 0 5-1.500 7.500-2.500 1.500-.5 2.500 1 1 2-3 1.500-5 3.500-9.500 3.500-1 1.500-3 2-6.500 2.500-1.500 0-1.500-1-1-2-1.500 0-2.500-.5-2.500-2 0-1.500.5-3 1.500-4-1-2-.5-4 1-6C7 8 7.500 6 9.500 4.500 10 3 11 1.500 12 1.500Z" fill="#498ba7"/></svg>
<div class="t" style="left:68px;top:10.5px;font-size:26px;letter-spacing:0.118px;color:#586069">yarn.lock</div>
</div>
<div style="left:72px;top:356px;width:2px;height:264px;background:#dde0e4"></div>
<div style="left:0;top:0;width:598px;height:159px;background:#f6f8fa"></div>
<div class="t" style="left:41px;top:26px;font-size:20.3px;letter-spacing:-0.945px;color:#2f363d">EXPLORER</div>
<svg style="left:533px;top:32px" width="28" height="6"><circle cx="2.500" cy="3" r="2" fill="#444d56"/><circle cx="13.500" cy="3" r="2" fill="#444d56"/><circle cx="24.500" cy="3" r="2" fill="#444d56"/></svg>
<div class="hdr" style="top:70px;border-top:0"><svg style="left:15px;top:12.5px" width="12" height="21"><path class="s" d="M1.200 1.200L10.500 10.500 1.200 19.800" stroke="#24292e" stroke-width="2" stroke-linecap="butt" stroke-linejoin="miter"/></svg><div class="t" style="left:41px;top:13px;font-size:21.3px;letter-spacing:-0.048px;color:#24292e;font-weight:700">OPEN EDITORS</div></div>
<div class="hdr" style="top:114px;box-shadow:0 3px 6px rgba(0,0,0,.10)"><svg style="left:10px;top:16px" width="21" height="12"><path class="s" d="M1.200 1.200L10.500 10.500 19.800 1.200" stroke="#24292e" stroke-width="2" stroke-linecap="butt" stroke-linejoin="miter"/></svg><div class="t" style="left:41px;top:11.6px;font-size:21.3px;letter-spacing:-0.379px;color:#24292e;font-weight:700">GUESTBOOK [CODESPACES]</div></div>
<div class="hdr" style="top:1764px"><svg style="left:15px;top:10.5px" width="12" height="21"><path class="s" d="M1.200 1.200L10.500 10.500 1.200 19.800" stroke="#24292e" stroke-width="2" stroke-linecap="butt" stroke-linejoin="miter"/></svg><div class="t" style="left:41px;top:11.6px;font-size:21.3px;letter-spacing:0.217px;color:#24292e;font-weight:700">OUTLINE</div></div>
<div class="hdr" style="top:1808px"><svg style="left:15px;top:10.5px" width="12" height="21"><path class="s" d="M1.200 1.200L10.500 10.500 1.200 19.800" stroke="#24292e" stroke-width="2" stroke-linecap="butt" stroke-linejoin="miter"/></svg><div class="t" style="left:41px;top:11.6px;font-size:21.3px;letter-spacing:0.450px;color:#24292e;font-weight:700">TIMELINE</div></div>
<div class="hdr" style="top:1852px"><svg style="left:15px;top:10.5px" width="12" height="21"><path class="s" d="M1.200 1.200L10.500 10.500 1.200 19.800" stroke="#24292e" stroke-width="2" stroke-linecap="butt" stroke-linejoin="miter"/></svg><div class="t" style="left:41px;top:11.6px;font-size:21.3px;letter-spacing:0.276px;color:#24292e;font-weight:700">NPM SCRIPTS</div></div>
</div>
<div id="edit" class="a">
<div style="left:136px;top:1006px;width:2740px;height:38px;background:#f6f8fa"></div><div style="left:136px;top:94px;width:2px;height:38px;background:#eff2f6"></div><div style="left:167px;top:94px;width:2px;height:38px;background:#eff2f6"></div><div style="left:136px;top:132px;width:2px;height:38px;background:#eff2f6"></div><div style="left:167px;top:132px;width:2px;height:38px;background:#eff2f6"></div><div style="left:136px;top:170px;width:2px;height:38px;background:#eff2f6"></div><div style="left:167px;top:170px;width:2px;height:38px;background:#eff2f6"></div><div style="left:136px;top:208px;width:2px;height:38px;background:#eff2f6"></div><div style="left:167px;top:208px;width:2px;height:38px;background:#eff2f6"></div><div style="left:198px;top:208px;width:2px;height:38px;background:#eff2f6"></div><div style="left:136px;top:246px;width:2px;height:38px;background:#eff2f6"></div><div style="left:167px;top:246px;width:2px;height:38px;background:#eff2f6"></div><div style="left:136px;top:284px;width:2px;height:38px;background:#eff2f6"></div><div style="left:167px;top:284px;width:2px;height:38px;background:#eff2f6"></div><div style="left:136px;top:322px;width:2px;height:38px;background:#eff2f6"></div><div style="left:167px;top:322px;width:2px;height:38px;background:#eff2f6"></div><div style="left:198px;top:322px;width:2px;height:38px;background:#eff2f6"></div><div style="left:136px;top:360px;width:2px;height:38px;background:#eff2f6"></div><div style="left:167px;top:360px;width:2px;height:38px;background:#eff2f6"></div><div style="left:136px;top:398px;width:2px;height:38px;background:#eff2f6"></div><div style="left:167px;top:398px;width:2px;height:38px;background:#eff2f6"></div><div style="left:136px;top:436px;width:2px;height:38px;background:#eff2f6"></div><div style="left:167px;top:436px;width:2px;height:38px;background:#eff2f6"></div><div style="left:136px;top:474px;width:2px;height:38px;background:#eff2f6"></div><div style="left:167px;top:474px;width:2px;height:38px;background:#eff2f6"></div><div style="left:136px;top:512px;width:2px;height:38px;background:#eff2f6"></div><div style="left:136px;top:550px;width:2px;height:38px;background:#eff2f6"></div><div style="left:136px;top:588px;width:2px;height:38px;background:#eff2f6"></div><div style="left:136px;top:626px;width:2px;height:38px;background:#eff2f6"></div><div style="left:167px;top:626px;width:2px;height:38px;background:#eff2f6"></div><div style="left:136px;top:664px;width:2px;height:38px;background:#eff2f6"></div><div style="left:167px;top:664px;width:2px;height:38px;background:#eff2f6"></div><div style="left:136px;top:702px;width:2px;height:38px;background:#eff2f6"></div><div style="left:167px;top:702px;width:2px;height:38px;background:#eff2f6"></div><div style="left:136px;top:740px;width:2px;height:38px;background:#eff2f6"></div><div style="left:167px;top:740px;width:2px;height:38px;background:#eff2f6"></div><div style="left:136px;top:778px;width:2px;height:38px;background:#eff2f6"></div><div style="left:167px;top:778px;width:2px;height:38px;background:#eff2f6"></div><div style="left:136px;top:816px;width:2px;height:38px;background:#eff2f6"></div><div style="left:136px;top:854px;width:2px;height:38px;background:#eff2f6"></div><div style="left:167px;top:854px;width:2px;height:38px;background:#d1d5da"></div><div style="left:136px;top:892px;width:2px;height:38px;background:#eff2f6"></div><div style="left:167px;top:892px;width:2px;height:38px;background:#d1d5da"></div><div style="left:136px;top:930px;width:2px;height:38px;background:#eff2f6"></div><div style="left:167px;top:930px;width:2px;height:38px;background:#d1d5da"></div><div style="left:136px;top:968px;width:2px;height:38px;background:#eff2f6"></div><div style="left:167px;top:968px;width:2px;height:38px;background:#d1d5da"></div><div style="left:136px;top:1006px;width:2px;height:38px;background:#eff2f6"></div><div style="left:167px;top:1006px;width:2px;height:38px;background:#d1d5da"></div><div style="left:136px;top:1044px;width:2px;height:38px;background:#eff2f6"></div><div style="left:167px;top:1044px;width:2px;height:38px;background:#d1d5da"></div><div style="left:136px;top:1082px;width:2px;height:38px;background:#eff2f6"></div><div style="left:167px;top:1082px;width:2px;height:38px;background:#d1d5da"></div><div style="left:136px;top:1120px;width:2px;height:38px;background:#eff2f6"></div><div style="left:136px;top:1158px;width:2px;height:38px;background:#eff2f6"></div><div style="left:136px;top:1196px;width:2px;height:38px;background:#eff2f6"></div><div style="left:136px;top:1234px;width:2px;height:38px;background:#eff2f6"></div><div style="left:167px;top:1234px;width:2px;height:38px;background:#eff2f6"></div><div style="left:136px;top:1272px;width:2px;height:38px;background:#eff2f6"></div><div style="left:167px;top:1272px;width:2px;height:38px;background:#eff2f6"></div><div style="left:198px;top:1272px;width:2px;height:38px;background:#eff2f6"></div><div style="left:136px;top:1310px;width:2px;height:38px;background:#eff2f6"></div><div style="left:167px;top:1310px;width:2px;height:38px;background:#eff2f6"></div><div style="left:136px;top:1348px;width:2px;height:38px;background:#eff2f6"></div><div style="left:167px;top:1348px;width:2px;height:38px;background:#eff2f6"></div><div style="left:136px;top:1386px;width:2px;height:38px;background:#eff2f6"></div><div style="left:167px;top:1386px;width:2px;height:38px;background:#eff2f6"></div><div style="left:136px;top:1424px;width:2px;height:38px;background:#eff2f6"></div><div style="left:167px;top:1424px;width:2px;height:38px;background:#eff2f6"></div><div style="left:198px;top:1424px;width:2px;height:38px;background:#eff2f6"></div><div style="left:136px;top:1462px;width:2px;height:38px;background:#eff2f6"></div><div style="left:167px;top:1462px;width:2px;height:38px;background:#eff2f6"></div><div style="left:198px;top:1462px;width:2px;height:38px;background:#eff2f6"></div><div style="left:228px;top:1462px;width:2px;height:38px;background:#eff2f6"></div><div style="left:136px;top:1500px;width:2px;height:38px;background:#eff2f6"></div><div style="left:167px;top:1500px;width:2px;height:38px;background:#eff2f6"></div><div style="left:198px;top:1500px;width:2px;height:38px;background:#eff2f6"></div><div style="left:228px;top:1500px;width:2px;height:38px;background:#eff2f6"></div><div style="left:136px;top:1538px;width:2px;height:38px;background:#eff2f6"></div><div style="left:167px;top:1538px;width:2px;height:38px;background:#eff2f6"></div><div style="left:198px;top:1538px;width:2px;height:38px;background:#eff2f6"></div><div style="left:228px;top:1538px;width:2px;height:38px;background:#eff2f6"></div><div style="left:136px;top:1576px;width:2px;height:38px;background:#eff2f6"></div><div style="left:167px;top:1576px;width:2px;height:38px;background:#eff2f6"></div><div style="left:198px;top:1576px;width:2px;height:38px;background:#eff2f6"></div><div style="left:136px;top:1614px;width:2px;height:38px;background:#eff2f6"></div><div style="left:167px;top:1614px;width:2px;height:38px;background:#eff2f6"></div><div style="left:136px;top:1652px;width:2px;height:38px;background:#eff2f6"></div><div style="left:136px;top:1804px;width:2px;height:38px;background:#eff2f6"></div><div style="left:136px;top:1842px;width:2px;height:38px;background:#eff2f6"></div><div style="left:136px;top:1880px;width:2px;height:38px;background:#eff2f6"></div><div class="ln" style="top:94px">23</div><div class="code" style="left:136px;top:94px"><span class="c">    // Determine whether we have any actual signatures</span></div><div class="ln" style="top:132px">24</div><div class="code" style="left:136px;top:132px"><span class="c">    // before we attempt to start the "active" carousel</span></div><div class="ln" style="top:170px">25</div><div class="code" style="left:136px;top:170px">    <span class="k">let</span> activeSignatures <span class="k">=</span> <span class="n">this</span>.state.signatures.<span class="n">filter</span>(</div><div class="ln" style="top:208px">26</div><div class="code" style="left:136px;top:208px">      ({ <span class="v">signature</span> }) <span class="k">=></span> <span class="k">typeof</span> <span class="v">signature</span> <span class="k">===</span> <span class="s1">"object"</span></div><div class="ln" style="top:246px">27</div><div class="code" style="left:136px;top:246px">    );</div><div class="ln" style="top:284px">28</div><div class="code" style="left:136px;top:284px">    <span class="k">if</span> (activeSignatures.<span class="n">length</span> <span class="k">===</span> <span class="n">0</span>) {</div><div class="ln" style="top:322px">29</div><div class="code" style="left:136px;top:322px">      <span class="k">return</span>;</div><div class="ln" style="top:360px">30</div><div class="code" style="left:136px;top:360px">    }</div><div class="ln" style="top:398px">31</div><div class="ln" style="top:436px">32</div><div class="code" style="left:136px;top:436px">    <span class="n">this</span>.<span class="f">updateActiveSignature</span>(activeSignatures);</div><div class="ln" style="top:474px">33</div><div class="code" style="left:136px;top:474px">    <span class="n">setInterval</span>(<span class="n">this</span>.<span class="f">updateActiveSignature</span>.<span class="n">bind</span>(<span class="n">this</span>, activeSignatures), <span class="n">2000</span>);</div><div class="ln" style="top:512px">34</div><div class="code" style="left:136px;top:512px">  }</div><div class="ln" style="top:550px">35</div><div class="ln" style="top:588px">36</div><div class="code" style="left:136px;top:588px"><span class="c">  /**</span></div><div class="ln" style="top:626px">37</div><div class="code" style="left:136px;top:626px"><span class="c">   * Updates the UI to visually indicate which of the current</span></div><div class="ln" style="top:664px">38</div><div class="code" style="left:136px;top:664px"><span class="c">   * signatures is "active", and therefore, highlighted more prominently.</span></div><div class="ln" style="top:702px">39</div><div class="code" style="left:136px;top:702px"><span class="c">   *</span></div><div class="ln" style="top:740px">40</div><div class="code" style="left:136px;top:740px"><span class="c">   * </span><span class="k">@param</span> <span class="f">{Array}</span> activeSignatures <span class="c">- An array of active signatures</span></div><div class="ln" style="top:778px">41</div><div class="code" style="left:136px;top:778px"><span class="c">   */</span></div><div class="ln" style="top:816px">42</div><div class="code" style="left:136px;top:816px">  <span class="f">updateActiveSignature</span>(<span class="v">activeSignatures</span>) <span class="bm">{</span></div><div class="ln" style="top:854px">43</div><div class="code" style="left:136px;top:854px">    <span class="v">activeSignatures</span>.<span class="n">forEach</span>((<span class="v">signature</span>) <span class="k">=></span> <span class="k">delete</span> <span class="v">signature</span>.isActive);</div><div class="ln" style="top:892px">44</div><div class="ln" style="top:930px">45</div><div class="code" style="left:136px;top:930px">    <span class="k">const</span> <span class="n">activeSignature</span> <span class="k">=</span> <span class="n">Math</span>.<span class="n">floor</span>(<span class="n">Math</span>.<span class="n">random</span>() <span class="k">*</span> <span class="v">activeSignatures</span>.<span class="n">length</span>);</div><div class="ln" style="top:968px">46</div><div class="code" style="left:136px;top:968px">    <span class="v">activeSignatures</span>[<span class="n">activeSignature</span>].isActive <span class="k">=</span> <span class="n">true</span>;</div><div class="ln" style="top:1006px;color:#24292e">47</div><div class="code" style="left:136px;top:1006px">    <span class="n">this</span>.state.signatures.</div><div class="ln" style="top:1044px">48</div><div class="ln" style="top:1082px">49</div><div class="code" style="left:136px;top:1082px">    <span class="n">this</span>.<span class="f">setState</span>({ signatures: <span class="n">this</span>.state.signatures });</div><div class="ln" style="top:1120px">50</div><div class="code" style="left:136px;top:1120px">  <span class="bm">}</span></div><div class="ln" style="top:1158px">51</div><div class="ln" style="top:1196px">52</div><div class="code" style="left:136px;top:1196px">  <span class="f">render</span>() {</div><div class="ln" style="top:1234px">53</div><div class="code" style="left:136px;top:1234px">    <span class="k">const</span> <span class="n">cells</span> <span class="k">=</span> <span class="n">this</span>.state.signatures.<span class="n">map</span>((<span class="v">signature</span>, <span class="v">index</span>) <span class="k">=></span> (</div><div class="ln" style="top:1272px">54</div><div class="code" style="left:136px;top:1272px">      &lt;<span class="n">GuestbookGridCell</span> <span class="f">key</span><span class="k">=</span>{index} {...signature} /&gt;</div><div class="ln" style="top:1310px">55</div><div class="code" style="left:136px;top:1310px">    ));</div><div class="ln" style="top:1348px">56</div><div class="ln" style="top:1386px">57</div><div class="code" style="left:136px;top:1386px">    <span class="k">return</span> (</div><div class="ln" style="top:1424px">58</div><div class="code" style="left:136px;top:1424px">      &lt;<span class="n">GridContainer</span>&gt;</div><div class="ln" style="top:1462px">59</div><div class="code" style="left:136px;top:1462px">        &lt;<span class="n">GridLegend</span> /&gt;</div><div class="ln" style="top:1500px">60</div><div class="code" style="left:136px;top:1500px">        &lt;<span class="n">Grid</span>&gt;{<span class="n">cells</span>}&lt;/<span class="n">Grid</span>&gt;</div><div class="ln" style="top:1538px">61</div><div class="code" style="left:136px;top:1538px">        &lt;<span class="n">GridArrow</span> /&gt;</div><div class="ln" style="top:1576px">62</div><div class="code" style="left:136px;top:1576px">      &lt;/<span class="n">GridContainer</span>&gt;</div><div class="ln" style="top:1614px">63</div><div class="code" style="left:136px;top:1614px">    );</div><div class="ln" style="top:1652px">64</div><div class="code" style="left:136px;top:1652px">  }</div><div class="ln" style="top:1690px">65</div><div class="code" style="left:136px;top:1690px">}</div><div class="ln" style="top:1728px">66</div><div class="ln" style="top:1766px">67</div><div class="code" style="left:136px;top:1766px"><span class="k">const</span> <span class="f">Grid</span> <span class="k">=</span> <span class="n">styled</span>.div<span class="s1">`</span></div><div class="ln" style="top:1804px">68</div><div class="code" style="left:136px;top:1804px"><span class="s1">  border-left: ${({ theme: { </span><span class="v">borderStyle</span><span class="s1"> } }) </span><span class="k">=></span> <span class="v">borderStyle</span><span class="s1">};</span></div><div class="ln" style="top:1842px">69</div><div class="code" style="left:136px;top:1842px"><span class="s1">  border-top: ${({ theme: { </span><span class="v">borderStyle</span><span class="s1"> } }) </span><span class="k">=></span> <span class="v">borderStyle</span><span class="s1">};</span></div><div class="ln" style="top:1880px">70</div><div class="code" style="left:136px;top:1880px"><span class="s1">  display: flex;</span></div><div class="code" style="left:637px;top:1006px;color:#c5c9cd">You, a few seconds ago • Uncommitted changes</div><div style="left:94px;top:1006px;width:6px;height:38px;background:#28a745"></div><svg style="left:197.6px;top:1113px;overflow:hidden" width="62" height="7"><path d="M0 5 L4 2 L6 2 L10 5 L12 5 L16 2 L18 2 L22 5 L24 5 L28 2 L30 2 L34 5 L36 5 L40 2 L42 2 L46 5 L48 5 L52 2 L54 2 L58 5 L60 5 L64 2 L66 2 L70 5 L72 5" fill="none" stroke="#e51400" stroke-width="1.900"/></svg>
<div style="left:2876px;top:114px;width:240px;height:1782px;background:#fff;overflow:hidden"><div style="left:8px;top:20px;width:232px;height:4px;background:#ffb3b3"></div><div style="left:8px;top:192px;width:232px;height:4px;background:#ffb3b3"></div><div style="left:8px;top:184px;width:232px;height:4px;background:#d6e8fc"></div><div style="left:60px;top:20px;width:24px;height:4px;background:#f05050"></div><div style="left:16px;top:192px;width:8px;height:4px;background:#f05050"></div><div style="left:2px;top:184px;width:2px;height:4px;background:#28a745"></div><div class="mm" style="left:8px;top:0;font-family:'DejaVu Sans Mono','Liberation Mono',monospace;font-weight:700;font-size:3.320px;line-height:4px;white-space:pre;color:#24292e;opacity:.85"><span class="k">import</span> GridArrow <span class="k">from</span> <span class="s1">"./GridArrow"</span>;
<span class="k">import</span> { GridLegend } <span class="k">from</span> <span class="s1">"./GridLegend"</span>;
<span class="k">import</span> GuestbookGridCell <span class="k">from</span> <span class="s1">"./GuestbookGridCell"</span>;
<span class="k">import</span> React, { Component } <span class="k">from</span> <span class="s1">"react"</span>;

<span class="k">import</span> logoImageUrl <span class="k">from</span> <span class="s1">"./logo.svg"</span>;
<span class="k">import</span> signatures <span class="k">from</span> <span class="s1">"../../model/signatureMatrix"</span>;
<span class="k">import</span> styled <span class="k">from</span> <span class="s1">"styled-components"</span>;

<span class="c">/**</span>
<span class="c"> * Represents the primary component, which</span>
<span class="c"> * displays the avatars for each user signature.</span>
<span class="c"> */</span>
<span class="k">export</span> <span class="k">default</span> <span class="k">class</span> <span class="f">GuestbookGrid</span> <span class="k">extends</span> <span class="f">Component</span> {
  <span class="k">constructor</span>(<span class="v">props</span>) {
    <span class="n">super</span>(<span class="v">props</span>);
    <span class="n">this</span>.state <span class="k">=</span> {
      signatures: signatures,
    };
  }

  <span class="f">componentDidMount</span>() {
<span class="c">    // Determine whether we have any actual signatures</span>
<span class="c">    // before we attempt to start the "active" carousel</span>
    <span class="k">let</span> activeSignatures <span class="k">=</span> <span class="n">this</span>.state.signatures.<span class="n">filter</span>(
      ({ <span class="v">signature</span> }) <span class="k">=></span> <span class="k">typeof</span> <span class="v">signature</span> <span class="k">===</span> <span class="s1">"object"</span>
    );
    <span class="k">if</span> (activeSignatures.<span class="n">length</span> <span class="k">===</span> <span class="n">0</span>) {
      <span class="k">return</span>;
    }

    <span class="n">this</span>.<span class="f">updateActiveSignature</span>(activeSignatures);
    <span class="n">setInterval</span>(<span class="n">this</span>.<span class="f">updateActiveSignature</span>.<span class="n">bind</span>(<span class="n">this</span>, activeSignatures), <span class="n">2000</span>);
  }

<span class="c">  /**</span>
<span class="c">   * Updates the UI to visually indicate which of the current</span>
<span class="c">   * signatures is "active", and therefore, highlighted more prominently.</span>
<span class="c">   *</span>
<span class="c">   * </span><span class="k">@param</span> <span class="f">{Array}</span> activeSignatures <span class="c">- An array of active signatures</span>
<span class="c">   */</span>
  <span class="f">updateActiveSignature</span>(<span class="v">activeSignatures</span>) <span class="bm">{</span>
    <span class="v">activeSignatures</span>.<span class="n">forEach</span>((<span class="v">signature</span>) <span class="k">=></span> <span class="k">delete</span> <span class="v">signature</span>.isActive);

    <span class="k">const</span> <span class="n">activeSignature</span> <span class="k">=</span> <span class="n">Math</span>.<span class="n">floor</span>(<span class="n">Math</span>.<span class="n">random</span>() <span class="k">*</span> <span class="v">activeSignatures</span>.<span class="n">length</span>);
    <span class="v">activeSignatures</span>[<span class="n">activeSignature</span>].isActive <span class="k">=</span> <span class="n">true</span>;
    <span class="n">this</span>.state.signatures.

    <span class="n">this</span>.<span class="f">setState</span>({ signatures: <span class="n">this</span>.state.signatures });
  <span class="bm">}</span>

  <span class="f">render</span>() {
    <span class="k">const</span> <span class="n">cells</span> <span class="k">=</span> <span class="n">this</span>.state.signatures.<span class="n">map</span>((<span class="v">signature</span>, <span class="v">index</span>) <span class="k">=></span> (
      &lt;<span class="n">GuestbookGridCell</span> <span class="f">key</span><span class="k">=</span>{index} {...signature} /&gt;
    ));

    <span class="k">return</span> (
      &lt;<span class="n">GridContainer</span>&gt;
        &lt;<span class="n">GridLegend</span> /&gt;
        &lt;<span class="n">Grid</span>&gt;{<span class="n">cells</span>}&lt;/<span class="n">Grid</span>&gt;
        &lt;<span class="n">GridArrow</span> /&gt;
      &lt;/<span class="n">GridContainer</span>&gt;
    );
  }
}

<span class="k">const</span> <span class="f">Grid</span> <span class="k">=</span> <span class="n">styled</span>.div<span class="s1">`</span>
<span class="s1">  border-left: ${({ theme: { </span><span class="v">borderStyle</span><span class="s1"> } }) </span><span class="k">=></span> <span class="v">borderStyle</span><span class="s1">};</span>
<span class="s1">  border-top: ${({ theme: { </span><span class="v">borderStyle</span><span class="s1"> } }) </span><span class="k">=></span> <span class="v">borderStyle</span><span class="s1">};</span>
<span class="s1">  display: flex;</span>
<span class="s1">  flex-wrap: wrap;</span>
<span class="s1">  width: 902px;</span>

<span class="s1">  &amp;::before {</span>
<span class="s1">    background: no-repeat center/50% url(${logoImageUrl});</span>
<span class="s1">    content: "";</span>
<span class="s1">    height: 100%;</span>
<span class="s1">    opacity: 0.1;</span>
<span class="s1">    position: absolute;</span>
<span class="s1">    width: 100%;</span>
<span class="s1">  }</span>
<span class="s1">`;</span>

<span class="k">const</span> <span class="f">GridContainer</span> <span class="k">=</span> <span class="n">styled</span>.div<span class="s1">`</span>
<span class="s1">  position: relative;</span>
<span class="s1">`;</span></div></div><div style="left:3116px;top:438px;width:28px;height:617px;background:#eaebed"></div><div style="left:3133px;top:193px;width:11px;height:13px;background:#f05050"></div><div style="left:3116px;top:745px;width:28px;height:4px;background:#4d78b0"></div><div style="left:3116px;top:749px;width:10px;height:12px;background:#8bc79a"></div><div style="left:3134px;top:773px;width:10px;height:13px;background:#ea6b73"></div>
<div style="left:0;top:114px;width:2876px;height:7px;background:linear-gradient(#e8e8e8,rgba(255,255,255,0))"></div>
<div style="left:0;top:70px;width:3144px;height:44px;background:#fff"></div>
<div style="left:0;top:0;width:3144px;height:70px;background:#f6f8fa;border-bottom:2px solid #e1e4e8"></div><div style="left:0px;top:0;width:270px;height:68px;border-right:2px solid #e1e4e8"></div><div style="left:270px;top:0;width:333px;height:68px;border-right:2px solid #e1e4e8"></div><div style="left:603px;top:0;width:326px;height:70px;background:#fff;border-right:2px solid #e1e4e8;border-top:2px solid #f9826c"></div><div style="left:929px;top:0;width:241px;height:68px;border-right:2px solid #e1e4e8"></div><svg style="left:27px;top:23px" width="26" height="26" viewBox="0 0 26 26"><circle cx="13" cy="13" r="11.500" fill="none" stroke="#498ba7" stroke-width="2.200"/></svg><div class="t" style="left:27px;top:26px;width:26px;text-align:center;font-family:'Liberation Serif',serif;font-weight:700;font-size:21px;color:#498ba7">i</div><div class="t" style="left:64px;top:23px;font-size:26px;letter-spacing:-0.843px;color:#6a737d">README.md</div><div class="t" style="left:299px;top:26px;font-size:22.500px;font-weight:700;color:#b7b73b;transform:scaleX(.8);transform-origin:0 0;letter-spacing:-.5px;-webkit-text-stroke:.5px #b7b73b">JS</div><div class="t" style="left:335px;top:23px;font-size:26px;letter-spacing:0.348px;color:#6a737d">signatureMatrix.js</div><div class="t" style="left:633px;top:26px;font-size:22.500px;font-weight:700;color:#b7b73b;transform:scaleX(.8);transform-origin:0 0;letter-spacing:-.5px;-webkit-text-stroke:.5px #b7b73b">JS</div><div class="t" style="left:667.5px;top:23px;font-size:26px;letter-spacing:0.133px;color:#24292e">GuestbookGrid.js</div><svg style="left:887px;top:27px" width="18" height="18"><path class="s" d="M1 1L17 17M17 1L1 17" stroke="#24292e" stroke-width="2" stroke-linecap="butt"/></svg><div class="t" style="left:959px;top:26px;font-size:22.500px;font-weight:700;color:#b7b73b;transform:scaleX(.8);transform-origin:0 0;letter-spacing:-.5px;-webkit-text-stroke:.5px #b7b73b">JS</div><div class="t" style="left:994px;top:23px;font-size:26px;letter-spacing:-0.145px;color:#6a737d">index.js</div><svg style="left:2692px;top:19px" width="32" height="32" viewBox="0 0 16 16"><circle cx="3" cy="2.8" r="1.8" fill="none" stroke="#3b4148" stroke-width="1.100"/><circle cx="13" cy="13.2" r="1.8" fill="none" stroke="#3b4148" stroke-width="1.100"/><path class="s" d="M3 4.600V9a3 3 0 0 0 3 3H9.500M7.500 9.800l2.200 2.200-2.200 2.200M13 11.400V7a3 3 0 0 0-3-3H6.500M8.500 1.800L6.300 4l2.200 2.200" stroke="#3b4148" stroke-width="1.100"/></svg><svg style="left:2756px;top:19px" width="32" height="32" viewBox="0 0 16 16"><circle cx="10.7" cy="8" r="4" fill="none" stroke="#3b4148" stroke-width="1.100"/><path class="s" d="M6.700 8H.8M5.300 3.300L.8 8l4.500 4.700" stroke="#3b4148" stroke-width="1.100"/></svg><svg style="left:2820px;top:19px" width="32" height="32" viewBox="0 0 16 16"><circle cx="8" cy="8" r="3.7" fill="none" stroke="#afb1b4" stroke-width="1.100"/><path class="s" d="M.2 8H4.300M11.700 8H15.800" stroke="#afb1b4" stroke-width="1.100"/></svg><svg style="left:2884px;top:19px" width="32" height="32" viewBox="0 0 16 16"><circle cx="5.3" cy="8" r="3.8" fill="none" stroke="#afb1b4" stroke-width="1.100"/><path class="s" d="M9.100 8h6.100M10.700 3.300L15.200 8l-4.500 4.700" stroke="#afb1b4" stroke-width="1.100"/></svg><svg style="left:2948px;top:19px" width="32" height="32" viewBox="0 0 16 16"><circle cx="8" cy="8" r="6.9" fill="none" stroke="#3b4148" stroke-width="1.100"/><circle cx="6.800" cy="4.600" r="1.400" fill="#3b4148"/><circle cx="6.800" cy="11.400" r="1.400" fill="#3b4148"/><circle cx="10.600" cy="8" r="1.400" fill="#3b4148"/><path class="s" d="M6.800 4.600V11.400M6.800 4.600L10.600 8" stroke="#3b4148" stroke-width="1.100"/></svg><svg style="left:3013px;top:19px" width="32" height="32" viewBox="0 0 16 16"><rect x="1.800" y="2" width="12.400" height="12" rx=".8" fill="none" stroke="#3b4148" stroke-width="1.100"/><path class="s" d="M8 2V14" stroke="#3b4148" stroke-width="1.100"/></svg><svg style="left:3079px;top:32px" width="28" height="6"><circle cx="2.500" cy="3" r="2.300" fill="#3b4148"/><circle cx="13.500" cy="3" r="2.300" fill="#3b4148"/><circle cx="24.500" cy="3" r="2.300" fill="#3b4148"/></svg>
<div class="t" style="left:32px;top:80px;font-size:26px;letter-spacing:-0.886px;color:#6a737d">src</div><svg style="left:76px;top:83px" width="12" height="20"><path class="s" d="M1.200 1.200L10 10 1.200 18.800" stroke="#6a737d" stroke-width="1.900" stroke-linecap="butt" stroke-linejoin="miter"/></svg><div class="t" style="left:98px;top:80px;font-size:26px;letter-spacing:0.485px;color:#6a737d">components</div><svg style="left:254px;top:83px" width="12" height="20"><path class="s" d="M1.200 1.200L10 10 1.200 18.800" stroke="#6a737d" stroke-width="1.900" stroke-linecap="butt" stroke-linejoin="miter"/></svg><div class="t" style="left:279px;top:80px;font-size:26px;letter-spacing:-0.155px;color:#6a737d">Grid</div><svg style="left:339px;top:83px" width="12" height="20"><path class="s" d="M1.200 1.200L10 10 1.200 18.800" stroke="#6a737d" stroke-width="1.900" stroke-linecap="butt" stroke-linejoin="miter"/></svg><div class="t" style="left:371px;top:82px;font-size:22.500px;font-weight:700;color:#b7b73b;transform:scaleX(.8);transform-origin:0 0;letter-spacing:-.5px;-webkit-text-stroke:.5px #b7b73b">JS</div><div class="t" style="left:405.5px;top:80px;font-size:26px;letter-spacing:0.133px;color:#6a737d">GuestbookGrid.js</div><svg style="left:622px;top:83px" width="12" height="20"><path class="s" d="M1.200 1.200L10 10 1.200 18.800" stroke="#6a737d" stroke-width="1.900" stroke-linecap="butt" stroke-linejoin="miter"/></svg><svg style="left:641.7px;top:75.6px" width="33" height="33" viewBox="0 0 16 16"><path class="s" d="M1.200 5.800L5.800 1.200 7.900 3.300 3.300 7.900ZM5.450 7.400H10.600M5.450 7.400V12.200H10.300M10.300 7.600L13.100 4.900 14.700 6.500 11.900 9.200ZM10.300 12.200L12.800 9.800 14.500 11.500 12 13.900Z" stroke="#d67e00" stroke-width=".95" stroke-linejoin="miter"/></svg><div class="t" style="left:687px;top:80px;font-size:26px;letter-spacing:0.241px;color:#6a737d">GuestbookGrid</div><svg style="left:877px;top:83px" width="12" height="20"><path class="s" d="M1.200 1.200L10 10 1.200 18.800" stroke="#6a737d" stroke-width="1.900" stroke-linecap="butt" stroke-linejoin="miter"/></svg><svg style="left:900.5px;top:76.5px" width="30" height="30" viewBox="0 0 16 16"><path class="s" d="M8 1.300L14 4.300V11.200L8 14.700 2 11.200V4.300ZM2.200 4.500L8 7.700 13.800 4.500M8 7.700V14.500" stroke="#652d90" stroke-width="1.0"/></svg><div class="t" style="left:944px;top:80px;font-size:26px;letter-spacing:0.375px;color:#6a737d">updateActiveSignature</div>
<div style="left:536px;top:1044px;width:860px;height:456px;background:#f6f8fa;border:2px solid #c8c8c8;overflow:hidden"><div style="left:0;top:0;width:856px;height:38px;background:#cce5ff"></div><svg style="left:4.500px;top:4px" width="30" height="30" viewBox="0 0 16 16"><path class="s" d="M3.500 3H1.500V13H3.500M12.500 3h2V13h-2" stroke="#007acc" stroke-width="1.200" stroke-linecap="butt" stroke-linejoin="miter"/><path class="s" d="M4.500 7.500L9 6l2.500 1v2.500L7 11 4.500 10ZM4.500 7.500L7 8.500 11.500 7M7 8.500V11" stroke="#007acc" stroke-width="1"/></svg><div class="code" style="right:20px;top:0;color:#586069;font-size:26.500px">interface Symbol</div><div class="code" style="left:45px;top:0px;color:#24292e;font-size:26.500px">Symbol</div><svg style="left:5px;top:43px" width="29" height="29" viewBox="0 0 16 16"><path class="s" d="M8 1.300L14 4.300V11.200L8 14.700 2 11.200V4.300ZM2.200 4.500L8 7.700 13.800 4.500M8 7.700V14.500" stroke="#652d90" stroke-width="1.0"/></svg><div class="code" style="left:45px;top:38px;color:#24292e;font-size:26.500px">clear</div><svg style="left:5px;top:81px" width="29" height="29" viewBox="0 0 16 16"><path class="s" d="M8 1.300L14 4.300V11.200L8 14.700 2 11.200V4.300ZM2.200 4.500L8 7.700 13.800 4.500M8 7.700V14.500" stroke="#652d90" stroke-width="1.0"/></svg><div class="code" style="left:45px;top:76px;color:#24292e;font-size:26.500px">concat</div><svg style="left:5px;top:119px" width="29" height="29" viewBox="0 0 16 16"><path class="s" d="M8 1.300L14 4.300V11.200L8 14.700 2 11.200V4.300ZM2.200 4.500L8 7.700 13.800 4.500M8 7.700V14.500" stroke="#652d90" stroke-width="1.0"/></svg><div class="code" style="left:45px;top:114px;color:#24292e;font-size:26.500px">copyWithin</div><svg style="left:5px;top:157px" width="29" height="29" viewBox="0 0 16 16"><path class="s" d="M8 1.300L14 4.300V11.200L8 14.700 2 11.200V4.300ZM2.200 4.500L8 7.700 13.800 4.500M8 7.700V14.500" stroke="#652d90" stroke-width="1.0"/></svg><div class="code" style="left:45px;top:152px;color:#24292e;font-size:26.500px">entries</div><svg style="left:5px;top:195px" width="29" height="29" viewBox="0 0 16 16"><path class="s" d="M8 1.300L14 4.300V11.200L8 14.700 2 11.200V4.300ZM2.200 4.500L8 7.700 13.800 4.500M8 7.700V14.500" stroke="#652d90" stroke-width="1.0"/></svg><div class="code" style="left:45px;top:190px;color:#24292e;font-size:26.500px">every</div><svg style="left:5px;top:233px" width="29" height="29" viewBox="0 0 16 16"><path class="s" d="M8 1.300L14 4.300V11.200L8 14.700 2 11.200V4.300ZM2.200 4.500L8 7.700 13.800 4.500M8 7.700V14.500" stroke="#652d90" stroke-width="1.0"/></svg><div class="code" style="left:45px;top:228px;color:#24292e;font-size:26.500px">fill</div><svg style="left:5px;top:271px" width="29" height="29" viewBox="0 0 16 16"><path class="s" d="M8 1.300L14 4.300V11.200L8 14.700 2 11.200V4.300ZM2.200 4.500L8 7.700 13.800 4.500M8 7.700V14.500" stroke="#652d90" stroke-width="1.0"/></svg><div class="code" style="left:45px;top:266px;color:#24292e;font-size:26.500px">filter</div><svg style="left:5px;top:309px" width="29" height="29" viewBox="0 0 16 16"><path class="s" d="M8 1.300L14 4.300V11.200L8 14.700 2 11.200V4.300ZM2.200 4.500L8 7.700 13.800 4.500M8 7.700V14.500" stroke="#652d90" stroke-width="1.0"/></svg><div class="code" style="left:45px;top:304px;color:#24292e;font-size:26.500px">find</div><svg style="left:5px;top:347px" width="29" height="29" viewBox="0 0 16 16"><path class="s" d="M8 1.300L14 4.300V11.200L8 14.700 2 11.200V4.300ZM2.200 4.500L8 7.700 13.800 4.500M8 7.700V14.500" stroke="#652d90" stroke-width="1.0"/></svg><div class="code" style="left:45px;top:342px;color:#24292e;font-size:26.500px">findIndex</div><svg style="left:5px;top:385px" width="29" height="29" viewBox="0 0 16 16"><path class="s" d="M8 1.300L14 4.300V11.200L8 14.700 2 11.200V4.300ZM2.200 4.500L8 7.700 13.800 4.500M8 7.700V14.500" stroke="#652d90" stroke-width="1.0"/></svg><div class="code" style="left:45px;top:380px;color:#24292e;font-size:26.500px">flat</div><svg style="left:5px;top:423px" width="29" height="29" viewBox="0 0 16 16"><path class="s" d="M8 1.300L14 4.300V11.200L8 14.700 2 11.200V4.300ZM2.200 4.500L8 7.700 13.800 4.500M8 7.700V14.500" stroke="#652d90" stroke-width="1.0"/></svg><div class="code" style="left:45px;top:418px;color:#24292e;font-size:26.500px">flatMap</div></div>
</div>
<div id="status" class="a">
<div style="left:0;top:0;width:207px;height:41px;background:#2188ff"></div>
<svg style="left:24px;top:8px" width="22" height="24"><path class="s" d="M1.500 8.500L9.500 15.500 1.500 22.500M19.500 1.500L12 8l7.500 6.500" stroke="#fff" stroke-width="2.200" stroke-linecap="butt" stroke-linejoin="miter"/></svg>
<div class="t" style="left:55.7px;top:10px;font-size:24px;letter-spacing:-0.382px;color:#fff">Codespaces</div>
<svg style="left:221px;top:6px" width="28" height="28" viewBox="0 0 16 16"><circle cx="4.5" cy="3" r="1.7" fill="none" stroke="#586069" stroke-width="1.1"/><circle cx="4.5" cy="13" r="1.7" fill="none" stroke="#586069" stroke-width="1.1"/><circle cx="11.5" cy="5" r="1.7" fill="none" stroke="#586069" stroke-width="1.1"/><path class="s" d="M4.500 4.700V11.300M11.500 6.700V7.500a2.500 2.500 0 0 1-2.500 2.500H7a2.500 2.500 0 0 0-2.500 1.500" stroke="#586069" stroke-width="1.1"/></svg>
<div class="t" style="left:259px;top:10px;font-size:24px;letter-spacing:0.187px;color:#586069">master*</div>
<svg style="left:374px;top:5px" width="32" height="32" viewBox="0 0 16 16"><path class="s" d="M2.600 8.800A5.400 5.400 0 0 1 12.700 5.300M.5 6.500L2.600 9 5.100 7.100M13.400 7.200A5.400 5.400 0 0 1 3.300 10.700M15.500 9.500L13.400 7 10.900 8.900" stroke="#586069" stroke-width="1.05"/></svg>
<svg style="left:437px;top:6px" width="28" height="28" viewBox="0 0 16 16"><circle cx="8" cy="8" r="6.5" fill="none" stroke="#586069" stroke-width="1.1"/><path class="s" d="M5.500 5.500L10.500 10.500M10.500 5.500L5.500 10.500" stroke="#586069" stroke-width="1.1"/></svg>
<div class="t" style="left:472px;top:10px;font-size:24px;letter-spacing:-1.848px;color:#586069">3</div>
<svg style="left:493px;top:6px" width="28" height="28" viewBox="0 0 16 16"><path class="s" d="M8 2L14.500 13.500H1.500ZM8 6.500V10M8 11.500V12" stroke="#586069" stroke-width="1.1"/></svg>
<div class="t" style="left:527.7px;top:10px;font-size:24px;letter-spacing:-0.848px;color:#586069">0</div>
<svg style="left:579px;top:7px" width="18" height="28" viewBox="0 0 9 14"><circle cx="4.5" cy="2.5" r="1.7" fill="none" stroke="#586069" stroke-width="1.1"/><path class="s" d="M1.800 6.500a1 1 0 0 1 1-1h3.400a1 1 0 0 1 1 1V10.500H5.800V13H3.200V10.500H1.800Z" stroke="#586069" stroke-width="1.1"/></svg>
<div class="t" style="left:609px;top:10px;font-size:24px;letter-spacing:0.119px;color:#586069">acangialosi</div>
<svg style="left:743px;top:10px" width="14" height="22" viewBox="0 0 7 11"><path class="s" d="M1.200.8H5.800V4L3.500 5.500 1.200 4ZM3.500.8V3" stroke="#586069" stroke-width="1"/><circle cx="3.5" cy="8" r="2.2" fill="none" stroke="#586069" stroke-width="1"/></svg>
<svg style="left:795px;top:5px" width="30" height="30" viewBox="0 0 16 16"><path class="s" d="M.8 10.500C1.500 6 5.500 4 9.500 4V1L15.200 5.800 9.500 10.500V7.500c-2.200 0-4.200.5-5.500 1.800" stroke="#586069" stroke-width="1.2"/><circle cx="6.7" cy="12.5" r="2.3" fill="none" stroke="#586069" stroke-width="1.2"/></svg>
<div class="t" style="left:831.3px;top:10px;font-size:24px;letter-spacing:-0.444px;color:#586069">Live Share</div>
<svg style="left:2536px;top:6px" width="18" height="28" viewBox="0 0 10 16"><circle cx="5" cy="7.5" r="2.6" fill="none" stroke="#586069" stroke-width="1.1"/><path class="s" d="M5 .8V4.900M5 10.100V15.200" stroke="#586069" stroke-width="1.1"/></svg>
<div class="t" style="left:2566px;top:10px;font-size:24px;letter-spacing:0.047px;color:#586069">You, a few seconds ago</div>
<div class="t" style="left:2855.6px;top:10px;font-size:24px;letter-spacing:-0.152px;color:#586069">Ln 47, Col 27</div>
<div class="t" style="left:3030px;top:10px;font-size:24px;letter-spacing:-0.748px;color:#586069">Spaces: 2</div>
<div class="t" style="left:3164px;top:10px;font-size:24px;letter-spacing:-0.839px;color:#586069">UTF-8</div>
<div class="t" style="left:3261.4px;top:10px;font-size:24px;letter-spacing:-2.504px;color:#586069">LF</div>
<div class="t" style="left:3316.7px;top:10px;font-size:24px;letter-spacing:-0.245px;color:#586069">JavaScript</div>
<div class="t" style="left:3459px;top:10px;font-size:24px;letter-spacing:-0.334px;color:#586069">Layout: US</div>
<div class="t" style="left:3608.5px;top:10px;font-size:24px;letter-spacing:0.393px;color:#586069">Prettier</div>
<svg style="left:3721px;top:6px" width="28" height="28" viewBox="0 0 16 16"><circle cx="5.2" cy="6.2" r="2.3" fill="none" stroke="#586069" stroke-width="1.1"/><path class="s" d="M1 14.500V13a3.200 3.200 0 0 1 3.200-3.200H6.200A3.200 3.200 0 0 1 9.400 13v1.500M8 1.500H15V7.500H12.500L10.500 9.500V7.500M10.500 4.500l1.200 1.200 2-2.200" stroke="#586069" stroke-width="1.1"/></svg>
<svg style="left:3783px;top:6px" width="28" height="28" viewBox="0 0 16 16"><path class="s" d="M3 11.500V7a5 5 0 0 1 6-4.900M13 8v3.500l1.200 1.500H1.800L3 11.500M6.500 13.200a1.500 1.500 0 0 0 3 0" stroke="#586069" stroke-width="1.1"/><circle cx="12.200" cy="3.800" r="2.600" fill="#586069"/></svg>
</div><div id="bottom" class="a"><div style="left:96px;top:0;width:687px;height:2px;background:#4a4a4a"></div><div style="left:1082px;top:0;width:88px;height:2px;background:#555"></div><div style="left:1278px;top:0;width:96px;height:2px;background:#a0561c"></div></div>
</body></html>
